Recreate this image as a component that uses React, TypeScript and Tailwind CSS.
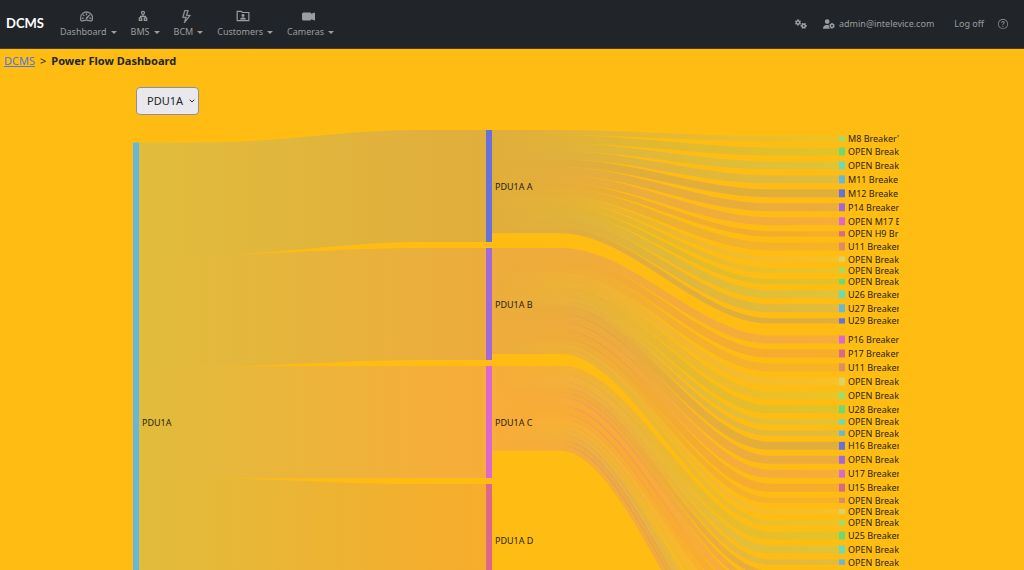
import React from "react";
import { BsSpeedometer2, BsLightning, BsCameraVideoFill, BsQuestionCircle } from "react-icons/bs";
import { FaGears, FaUserGear } from "react-icons/fa6";
import { LuChevronDown } from "react-icons/lu";

const BLUE = "#67b7dc";
const INDIGO = "#6771dc";
const PURPLE = "#a367dc";
const PINK = "#dc67ce";
const ROSE = "#dc6788";
const CORAL = "#dc8c67";
const SAND = "#dcd267";
const LIME = "#a0dc67";
const GREEN = "#67dc75";
const TEAL = "#67dcbb";
const CYCLE = [LIME, GREEN, TEAL, BLUE, INDIGO, PURPLE, PINK, ROSE, CORAL, SAND];

const L = 7.95;
const S = 5.3;
const GAP = 6;
const NODE_W = 6;
const COLS = [0, 353, 706];
const FEED_H = 112;

type Leaf = { label: string; h: number };
type Link = { x: number; y0: number; y1: number; h: number; from: string; to: string };

const FEEDS: { name: string; color: string; leaves: Leaf[] }[] = [
  {
    name: "PDU1A A",
    color: INDIGO,
    leaves: [
      { label: "M8 Breaker'", h: S },
      { label: "OPEN Break", h: L },
      { label: "OPEN Break", h: L },
      { label: "M11 Breake", h: L },
      { label: "M12 Breake", h: L },
      { label: "P14 Breaker", h: L },
      { label: "OPEN M17 B", h: L },
      { label: "OPEN H9 Br", h: S },
      { label: "U11 Breaker", h: L },
      { label: "OPEN Break", h: S },
      { label: "OPEN Break", h: S },
      { label: "OPEN Break", h: S },
      { label: "U26 Breaker", h: L },
      { label: "U27 Breaker", h: L },
      { label: "U29 Breaker", h: S },
      { label: "", h: 0 },
    ],
  },
  {
    name: "PDU1A B",
    color: PURPLE,
    leaves: [
      { label: "P16 Breaker", h: L },
      { label: "P17 Breaker", h: L },
      { label: "U11 Breaker", h: L },
      { label: "OPEN Break", h: L },
      { label: "OPEN Break", h: L },
      { label: "U28 Breaker", h: L },
      { label: "OPEN Break", h: S },
      { label: "OPEN Break", h: S },
      { label: "H16 Breaker", h: L },
      { label: "OPEN Break", h: L },
      { label: "U17 Breaker", h: L },
      { label: "U15 Breaker", h: L },
      { label: "OPEN Break", h: S },
      { label: "OPEN Break", h: S },
      { label: "OPEN Break", h: S },
    ],
  },
  {
    name: "PDU1A C",
    color: PINK,
    leaves: [
      { label: "U25 Breaker", h: L },
      { label: "OPEN Break", h: L },
      { label: "OPEN Break", h: S },
      { label: "OPEN Break", h: S },
      { label: "OPEN Break", h: S },
      { label: "U19 Breaker", h: L },
      { label: "U21 Breaker", h: L },
      { label: "OPEN Break", h: S },
      { label: "OPEN Break", h: S },
      { label: "OPEN Break", h: S },
      { label: "", h: 0 },
      { label: "OPEN Break", h: S },
      { label: "OPEN Break", h: S },
      { label: "OPEN Break", h: S },
      { label: "OPEN Break", h: S },
    ],
  },
  { name: "PDU1A D", color: ROSE, leaves: [] },
  { name: "PDU1A E", color: CORAL, leaves: [] },
];

const ROOT_Y = 12.5;
const nodes: { x: number; y: number; h: number; color: string; label: string }[] = [
  { x: COLS[0], y: ROOT_Y, h: FEED_H * 5, color: BLUE, label: "PDU1A" },
];
const links: Link[] = [];
let leafY = 6.2;
let leafIndex = 0;
FEEDS.forEach((feed, i) => {
  const y = i * (FEED_H + GAP);
  nodes.push({ x: COLS[1], y, h: FEED_H, color: feed.color, label: feed.name });
  links.push({ x: COLS[0], y0: ROOT_Y + i * FEED_H, y1: y, h: FEED_H, from: BLUE, to: feed.color });
  let outY = y;
  feed.leaves.forEach((leaf) => {
    const color = CYCLE[leafIndex % CYCLE.length];
    if (leaf.h > 0) {
      nodes.push({ x: COLS[2], y: leafY, h: leaf.h, color, label: leaf.label });
      links.push({ x: COLS[1], y0: outY, y1: leafY, h: leaf.h, from: feed.color, to: color });
    }
    outY += leaf.h;
    leafY += leaf.h + GAP;
    leafIndex += 1;
  });
});

// The bends of the upper and lower edge are shifted apart so that a steep band keeps its thickness.
function linkPath({ x, y0, y1, h }: Link) {
  const a = x + NODE_W;
  const d = x + 353;
  const run = d - a;
  const b = a + run * 0.2;
  const c = d - run * 0.2;
  const m = (c - b) / 3;
  const s = (h / 2) * Math.tan(Math.atan2(y1 - y0, c - b) / 2);
  const tb = b + s;
  const tc = c + s;
  const bb = b - s;
  const bc = c - s;
  return `M${a} ${y0}H${tb}C${tb + m} ${y0} ${tc - m} ${y1} ${tc} ${y1}H${d}V${y1 + h}H${bc}C${bc - m} ${y1 + h} ${bb + m} ${y0 + h} ${bb} ${y0 + h}H${a}Z`;
}

function Sankey() {
  return (
    <svg width="766" height="584" role="img" aria-label="Power flow from PDU1A" className="block shrink-0 overflow-hidden">
      <defs>
        {links.map((l, i) => (
          <linearGradient key={i} id={`flow-${i}`} gradientUnits="userSpaceOnUse" x1={l.x + NODE_W} x2={l.x + 353} y1="0" y2="0">
            <stop offset="0" stopColor={l.from} />
            <stop offset="1" stopColor={l.to} />
          </linearGradient>
        ))}
      </defs>
      {links.map((l, i) => (
        <path key={i} d={linkPath(l)} fill={`url(#flow-${i})`} fillOpacity="0.2" />
      ))}
      {nodes.map((n, i) => (
        <g key={i}>
          <rect x={n.x} y={n.y} width={NODE_W} height={n.h} fill={n.color} />
          <text x={n.x + 9} y={n.y + n.h / 2} dominantBaseline="central" className="fill-[#2b2410] text-[9px]">
            {n.label}
          </text>
        </g>
      ))}
    </svg>
  );
}

function OrgIcon() {
  return (
    <svg viewBox="0 0 12 12" className="size-3" fill="none" stroke="currentColor" strokeWidth="1.2">
      <circle cx="6" cy="2.800" r="1.500" />
      <path d="M6 4.300V6.400M3.500 8V6.400H8.500V8" />
      <rect x="2.300" y="8" width="2.400" height="2.400" />
      <rect x="7.300" y="8" width="2.400" height="2.400" />
    </svg>
  );
}

function CustomersIcon() {
  return (
    <svg viewBox="0 0 24 20" className="h-3 w-[14px]" fill="none" stroke="currentColor" strokeWidth="2">
      <path d="M2 2H9L11 4H22V18H2Z" />
      <circle cx="12" cy="9" r="2.500" fill="currentColor" stroke="none" />
      <path d="M7 16C7 11.500 17 11.500 17 16Z" fill="currentColor" stroke="none" />
    </svg>
  );
}

const MENU = [
  { label: "Dashboard", icon: <BsSpeedometer2 className="size-[13px] stroke-current [stroke-width:0.5]" /> },
  { label: "BMS", icon: <OrgIcon /> },
  { label: "BCM", icon: <BsLightning className="size-[13px] stroke-current [stroke-width:0.5]" /> },
  { label: "Customers", icon: <CustomersIcon /> },
  { label: "Cameras", icon: <BsCameraVideoFill className="size-[13px]" /> },
];

export default function App() {
  return (
    <div className="h-screen overflow-hidden bg-[#ffbd14] font-['Noto_Sans',sans-serif] text-[#212529]">
      <header className="flex h-[49px] items-center justify-between border-b border-[#4b3d22] bg-[#212529] px-[6px] text-[9px] text-[#9b9d9e]">
        <div className="flex items-center">
          <a href="#" className="w-[54px] font-['Lato',sans-serif] text-[13px] font-bold text-white">
            DCMS
          </a>
          <nav className="flex gap-[14px]">
            {MENU.map((m) => (
              <button key={m.label} type="button" className="flex flex-col items-start gap-1">
                <span className="flex h-3 w-full items-center justify-center pr-1">{m.icon}</span>
                <span className="flex items-center gap-1 leading-3">
                  {m.label}
                  <span className="border-x-[3px] border-t-[3px] border-x-transparent border-t-current" />
                </span>
              </button>
            ))}
          </nav>
        </div>
        <div className="flex items-center pr-[10px]">
          <a href="#" aria-label="Settings">
            <FaGears className="size-3" />
          </a>
          <a href="#" className="ml-4 flex items-center gap-1">
            <FaUserGear className="size-3" />
            admin@intelevice.com
          </a>
          <a href="#" className="ml-5">
            Log off
          </a>
          <a href="#" aria-label="Help" className="ml-[14px]">
            <BsQuestionCircle className="size-[10px]" />
          </a>
        </div>
      </header>
      <main>
        <nav className="flex gap-[5px] px-1 pt-1 text-[11px] leading-4">
          <a href="#" className="text-[#5078d8] underline">
            DCMS
          </a>
          <span>&gt;</span>
          <span className="font-bold">Power Flow Dashboard</span>
        </nav>
        <div className="mx-auto mt-[18px] w-[766px] pl-[7px]">
          <div className="relative inline-flex items-center">
            <select aria-label="PDU" className="h-7 w-[63px] appearance-none rounded border border-[#8f8f9d] bg-[#e9e9ed] pl-[10px] text-[11px]">
              <option>PDU1A</option>
            </select>
            <LuChevronDown className="pointer-events-none absolute right-[3px] size-2 [stroke-width:3]" />
          </div>
        </div>
        <div className="mt-[15px] flex justify-center pl-2">
          <Sankey />
        </div>
      </main>
    </div>
  );
}
